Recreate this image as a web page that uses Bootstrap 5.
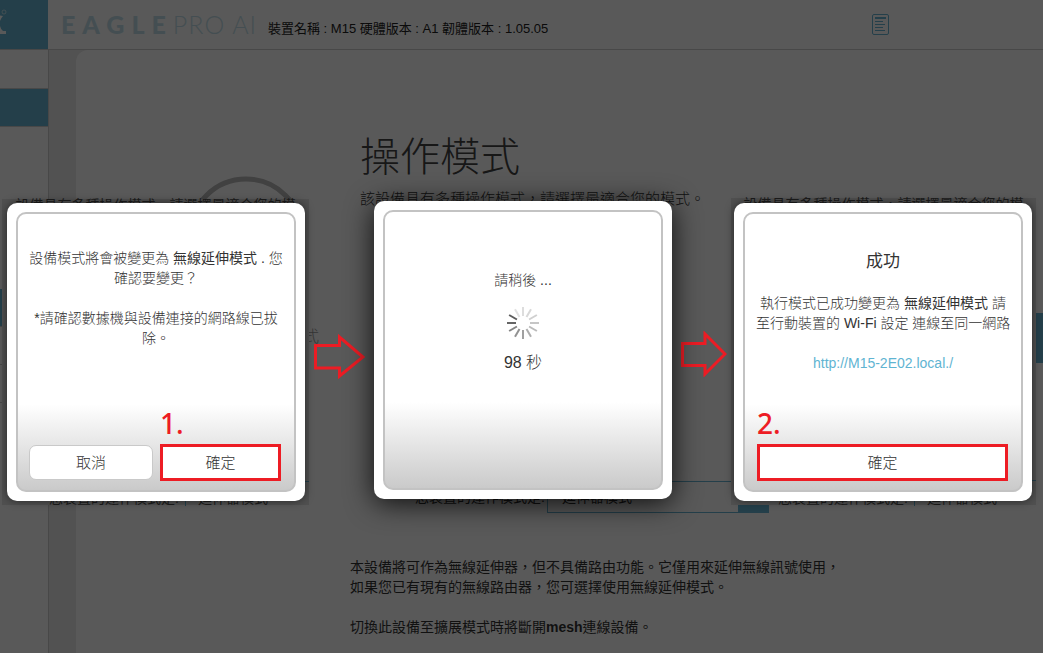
<!DOCTYPE html>
<html lang="zh-Hant">
<head>
<meta charset="utf-8">
<meta name="viewport" content="width=device-width, initial-scale=1">
<title>操作模式</title>
<link href="https://cdn.jsdelivr.net/npm/bootstrap@5.3.0/dist/css/bootstrap.min.css" rel="stylesheet">
<style>
:root { --teal: #67b4d3; --line: #cdcdcd; --mark: #ed1c24; }
body { font-family: "Liberation Sans", "Noto Sans CJK TC", sans-serif; font-size: 14px; line-height: 20px; color: #333; background: #fff; overflow-x: hidden; }
.page { min-height: 100vh; }
.topbar { height: 50px; border-bottom: 1px solid var(--line); }
.logo-box { width: 48px; height: 49px; background: var(--teal); }
.brand { font-family: Lato, sans-serif; font-size: 25px; line-height: 48px; color: #c4dfea; margin-left: 13px; white-space: nowrap; width: 207px; }
.brand b { font-weight: 900; letter-spacing: 7px; }
.brand span { font-weight: 300; letter-spacing: 1px; }
.device { font-size: 13px; padding-top: 8px; white-space: nowrap; color: #222; }
.doc-icon { margin-right: 154px; }
.side { width: 49px; border-right: 1px solid var(--line); }
.side a { display: block; height: 38px; border-bottom: 1px solid var(--line); flex: none; }
.side a:first-child { height: 39px; }
.side a.on { background: var(--teal); }
.side .skip { height: 162px; flex: none; }
.gutter { background: #ebebeb; padding-left: 27px; }
.content { background: #fff; border-top-left-radius: 12px; padding-top: 83px; }
.intro { min-height: 348px; }
.mode { width: 132px; margin-left: 111px; margin-right: 41px; padding-top: 43px; font-size: 16px; color: #999; }
.mode-name { margin-top: 33px; font-weight: 300; }
.heading { font-size: 40px; line-height: 48px; font-weight: 300; margin-bottom: 8px; color: #444; }
.sub { font-size: 15px; white-space: nowrap; font-weight: 300; }
.next-edge { width: 8px; height: 50px; margin-top: 180px; background: var(--teal); }
.mode-form { padding-left: 339px; }
.mode-form label { width: 132px; }
.pick { width: 222px; height: 32px; border: 1px solid var(--teal); }
.pick select { appearance: none; border: 0; background: transparent; padding: 0 14px; min-width: 0; font-size: 14px; color: #333; }
.pick span { width: 30px; background: var(--teal); }
.notes { padding-left: 274px; margin-top: 44px; color: #333; }
.dim { background: rgba(0, 0, 0, .65); }
.steps { padding: 198px 7px 0 2px; }
.shot { width: 307px; height: 307px; padding: 5px 4px 4px 5px; background: #505050; flex: none; color: #1c1c1c; }
.shot-first { margin-top: 1px; height: 306px; padding-top: 4px; }
.shot-mid { width: 308px; padding: 3px 5px 5px; background: none; }
.shot-last { width: 305px; padding-left: 3px; }
.peek { left: 0; right: 0; white-space: nowrap; }
.peek-top { top: 0; line-height: 12px; font-size: 14px; text-align: center; }
.peek-end { bottom: 0; line-height: 14px; padding-left: 47px; }
.peek-end span { border-left: 1px solid #243f4a; margin-left: 6px; padding-left: 12px; }
.peek-line { right: 0; top: 282px; width: 8px; height: 1px; background: #243f4a; }
.box { width: 298px; height: 298px; padding: 9px; border-radius: 10px; background: #fff; box-shadow: 0 0 9px rgba(0, 0, 0, .5); position: relative; color: #333; }
.shot-mid .box { box-shadow: 0 4px 28px rgba(0, 0, 0, .85); }
.frame { border: 2px solid #c3c3c3; border-radius: 10px; padding: 34px 11px 9px; background: linear-gradient(#fff 69%, #cacaca 100%); font-weight: 300; }
.frame p { white-space: nowrap; }
.frame b { font-weight: 400; }
.frame a { color: #5fb4d2; font-size: 14px; }
.say-done { font-size: 17px; line-height: 24px; font-weight: 400; margin: 2px 0 19px; }
.count { font-size: 16px; line-height: 20px; margin-top: 13px; }
.num { font-family: "Noto Sans", sans-serif; font-size: 28px; line-height: 32px; height: 37px; color: var(--mark); font-weight: 500; text-align: left; }
.act { height: 35px; padding: 0; border: 1px solid #c9c9c9; border-radius: 7px; background: #fff; font-size: 15px; font-weight: 300; color: #333; }
.act-key { height: 37px; border: 3px solid var(--mark); border-radius: 0; }
.act-cancel { width: 124px; margin-bottom: 1px; }
.ok-col { margin-left: 7px; padding-right: 2px; }
.ok-wide { padding: 0 2px 0 1px; }
.arrow { flex: none; }
</style>
</head>
<body class="position-relative">
<div class="page d-flex flex-column">
  <header class="topbar d-flex align-items-start">
    <div class="logo-box">
      <svg width="48" height="49" viewBox="0 0 48 49"><path d="M0 15.500L3 16Q1 18 0 21zM0 26q1 4 3 5h3v3H0z" fill="#fff"/><circle cx="4" cy="12" r="2" fill="none" stroke="#fff" stroke-width=".8" opacity=".7"/></svg>
    </div>
    <div class="brand"><b>EAGLE</b><span>PRO AI</span></div>
    <div class="device align-self-center">裝置名稱 : M15 硬體版本 : A1 韌體版本 : 1.05.05</div>
    <svg class="doc-icon ms-auto align-self-center" width="17" height="21" viewBox="0 0 17 21" fill="none" stroke="#67b4d3"><rect x=".5" y=".5" width="16" height="20" rx="1.5"/><path d="M3 4h11" stroke-width="2"/><path d="M3 7.500h8M3 10.500h10M3 13.500h8M3 16.500h10"/></svg>
  </header>
  <div class="d-flex flex-grow-1">
    <nav class="side d-flex flex-column flex-shrink-0" aria-label="選單">
      <a href="#"></a><a href="#" class="on"></a>
      <div class="skip"></div>
      <a href="#" class="on"></a><a href="#"></a><a href="#"></a>
    </nav>
    <div class="gutter flex-grow-1 d-flex">
      <main class="content flex-grow-1">
        <div class="intro d-flex">
          <div class="mode text-end flex-shrink-0">
            <svg class="d-block" width="118" height="118" viewBox="0 0 118 118"><circle cx="59" cy="59" r="56" fill="none" stroke="#b9b9b9" stroke-width="5"/></svg>
            <div class="mode-name">模式</div>
          </div>
          <div>
            <h1 class="heading">操作模式</h1>
            <div class="sub">該設備具有多種操作模式，請選擇最適合您的模式。</div>
          </div>
          <div class="next-edge ms-auto"></div>
        </div>
        <form class="mode-form d-flex align-items-center">
          <label for="mode">您裝置的運作模式是:</label>
          <div class="pick d-flex">
            <select id="mode" class="flex-grow-1"><option>延伸器模式</option></select><span></span>
          </div>
        </form>
        <div class="notes">
          <p class="mb-0">本設備將可作為無線延伸器，但不具備路由功能。它僅用來延伸無線訊號使用，<br>如果您已有現有的無線路由器，您可選擇使用無線延伸模式。</p>
          <p class="mt-3 pt-1 mb-0">切換此設備至擴展模式時將斷開<b>mesh</b>連線設備。</p>
        </div>
      </main>
    </div>
  </div>
</div>

<div class="dim position-absolute top-0 start-0 w-100 h-100">
  <div class="steps d-flex justify-content-between">
    <section class="shot shot-first position-relative">
      <div class="peek peek-top position-absolute">設備具有多種操作模式，請選擇最適合您的模</div>
      <div class="peek peek-end position-absolute">您裝置的運作模式是:<span>延伸器模式</span></div>
      <div class="peek-line position-absolute"></div>
      <div class="box">
        <div class="frame h-100 d-flex flex-column text-center">
          <p class="mb-3 pb-1">設備模式將會被變更為 <b>無線延伸模式</b> . 您<br>確認要變更？</p>
          <p class="mb-0">*請確認數據機與設備連接的網路線已拔<br>除。</p>
          <div class="d-flex align-items-end mt-auto">
            <button type="button" class="act act-cancel">取消</button>
            <div class="ok-col flex-grow-1 d-flex flex-column">
              <div class="num">1.</div>
              <button type="button" class="act act-key">確定</button>
            </div>
          </div>
        </div>
      </div>
    </section>

    <svg class="arrow" style="margin-top:136px" width="52" height="46" viewBox="0 0 52 46" fill="none" stroke="#ed1c24" stroke-width="3"><path d="M2.500 11.500H26.500V3L50 23 26.500 42V34H2.500z"/></svg>

    <section class="shot shot-mid position-relative">
      <div class="box">
        <div class="frame h-100 text-center">
          <p class="mb-0 mt-4">請稍後 ...</p>
          <svg class="d-block mx-auto mt-3" width="34" height="34" viewBox="-17 -17 34 34" stroke-width="2">
            <path d="M0-7V-16" stroke="#ddd"/><path d="M0-7V-16" stroke="#d8d8d8" transform="rotate(30)"/><path d="M0-7V-16" stroke="#d0d0d0" transform="rotate(60)"/><path d="M0-7V-16" stroke="#c6c6c6" transform="rotate(90)"/><path d="M0-7V-16" stroke="#bbb" transform="rotate(120)"/><path d="M0-7V-16" stroke="#aeaeae" transform="rotate(150)"/><path d="M0-7V-16" stroke="#a0a0a0" transform="rotate(180)"/><path d="M0-7V-16" stroke="#929292" transform="rotate(210)"/><path d="M0-7V-16" stroke="#848484" transform="rotate(240)"/><path d="M0-7V-16" stroke="#666" transform="rotate(270)"/><path d="M0-7V-16" stroke="#5c5c5c" transform="rotate(300)"/><path d="M0-7V-16" stroke="#e2e2e2" transform="rotate(330)"/>
          </svg>
          <p class="count mb-0">98 秒</p>
        </div>
      </div>
    </section>

    <svg class="arrow" style="margin-top:133px" width="46" height="46" viewBox="0 0 46 46" fill="none" stroke="#ed1c24" stroke-width="3"><path d="M1.500 12.500H24V3L44 23 24 43V34.500H1.500z"/></svg>

    <section class="shot shot-last position-relative">
      <div class="peek peek-top position-absolute">設備具有多種操作模式，請選擇最適合您的模</div>
      <div class="peek peek-end position-absolute">您裝置的運作模式是:<span>延伸器模式</span></div>
      <div class="peek-line position-absolute"></div>
      <div class="box">
        <div class="frame h-100 d-flex flex-column text-center">
          <p class="say-done">成功</p>
          <p class="mb-3 pb-1">執行模式已成功變更為 <b>無線延伸模式</b> 請<br>至行動裝置的 Wi-Fi 設定 連線至同一網路</p>
          <a href="#" class="text-decoration-none">http://M15-2E02.local./</a>
          <div class="ok-wide d-flex flex-column mt-auto">
            <div class="num">2.</div>
            <button type="button" class="act act-key">確定</button>
          </div>
        </div>
      </div>
    </section>
  </div>
</div>
<script src="https://cdn.jsdelivr.net/npm/bootstrap@5.3.0/dist/js/bootstrap.bundle.min.js"></script>
</body>
</html>
